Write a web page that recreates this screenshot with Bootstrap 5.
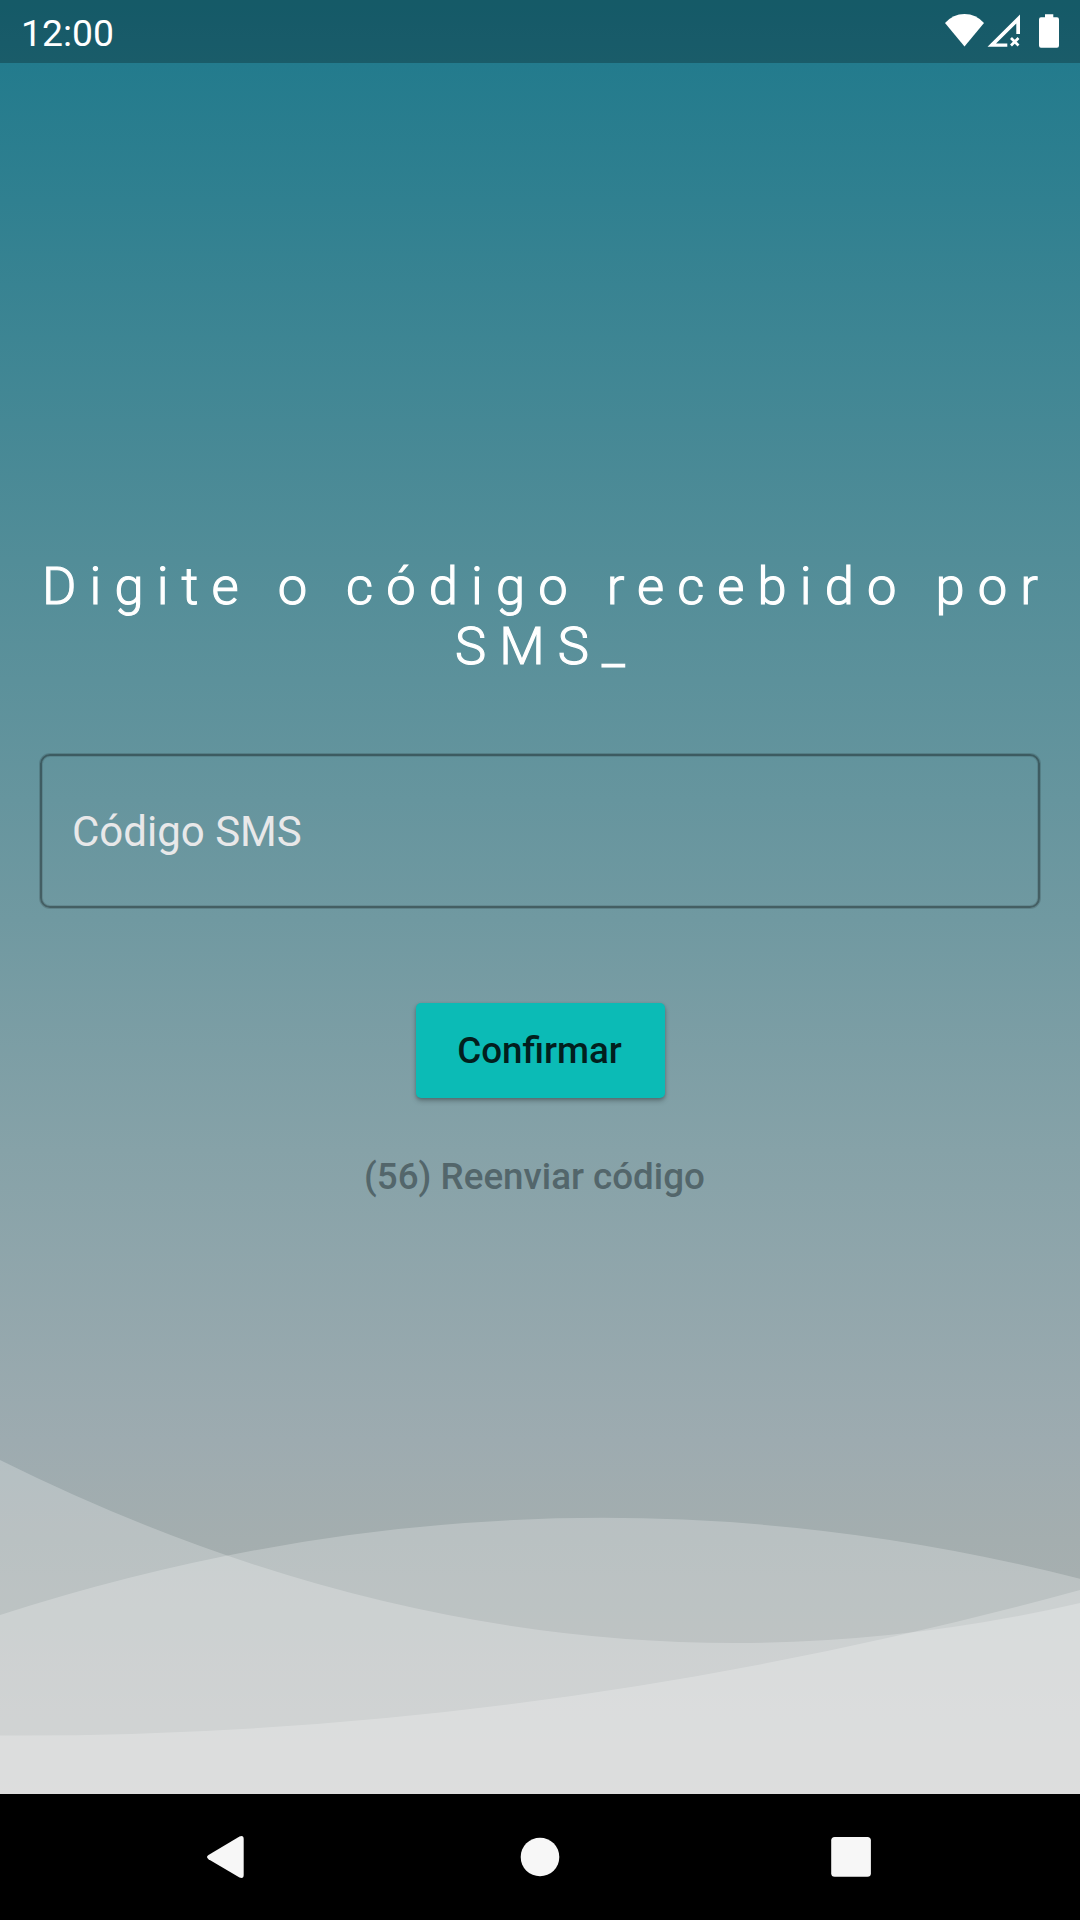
<!DOCTYPE html>
<html lang="pt-BR">
<head>
<meta charset="utf-8">
<meta name="viewport" content="width=device-width, initial-scale=1">
<title>Código SMS</title>
<link href="https://cdn.jsdelivr.net/npm/bootstrap@5.3.0/dist/css/bootstrap.min.css" rel="stylesheet">
<style>
body{font-family:Roboto,"Liberation Sans",sans-serif;background:#000;overflow:hidden}
.screen{height:1920px}
.app-body{height:1794px;background:linear-gradient(#1c788a 0,#237b8d 63px,#528d98 560px,#7099a1 920px,#86a2a8 1150px,#9dabb0 1440px,#a4aeaf 1540px,#b3b5b5 1794px)}
.status-bar{height:63px;background:rgba(0,0,0,.25);padding:0 20px 0 21px}
.clock{font-size:37.3px;line-height:63px;padding-top:2px}
.waves{z-index:0}
.form-area{z-index:1;padding:493px 40px 0}
.title-text{font-size:52.5px;font-weight:300;line-height:60px;letter-spacing:13.1px;margin:0 -20px 78px;padding-left:13px;-webkit-text-stroke:1.1px #fff}
.code-input,.code-input:focus{height:154px;border:2px solid rgba(0,0,0,.38);border-radius:10px;background:transparent;font-size:42px;padding:0 30px;box-shadow:0 0 0 1px rgba(0,0,0,.14),inset 0 0 0 1px rgba(0,0,0,.1);color:#fff}
.code-input::placeholder{color:#e8e8e9;opacity:1}
.btn-confirm,.btn-resend{font-size:36.75px;font-weight:500;line-height:44px}
.btn-confirm{--bs-btn-bg:#0bbbb6;--bs-btn-color:#021f1e;--bs-btn-border-color:#0bbbb6;width:249px;height:95px;margin-top:95px;border:0;border-radius:5px;padding:7px 12px 6px 11px;box-shadow:0 3px 5px rgba(0,0,0,.25),0 1px 3px rgba(0,0,0,.15)}
.btn-resend,.btn-resend:disabled{color:#53666b;opacity:1;border:0;padding:0;margin:57px 11px 0 0}
.nav-keys{height:126px}
</style>
<script src="https://cdn.jsdelivr.net/npm/bootstrap@5.3.0/dist/js/bootstrap.bundle.min.js"></script>
</head>
<body>
<div class="screen d-flex flex-column">
  <div class="app-body position-relative">
    <header class="status-bar d-flex justify-content-between text-white">
      <span class="clock">12:00</span>
      <svg width="120" height="63" viewBox="940 0 120 63" fill="#fff" aria-hidden="true">
        <path d="M945 23Q953 14 964.500 14T984 23L964.500 46.500Z"/>
        <path d="M987.500 46.700L1020 14.500V34H1016.300V23.500L996 43.500H1007.300V46.700Z"/>
        <path d="M1011 38L1018.500 45.500M1018.500 38L1011 45.500" stroke="#fff" stroke-width="2.700"/>
        <path d="M1045 14.200H1053.300V17.300H1057Q1059 17.300 1059 19.500V45.500Q1059 47.700 1057 47.700H1041Q1039 47.700 1039 45.500V19.500Q1039 17.300 1041 17.300H1045Z"/>
      </svg>
    </header>
    <svg class="waves position-absolute bottom-0 start-0" width="1080" height="354" viewBox="0 1440 1080 354" fill="#fff" fill-opacity=".24" aria-hidden="true">
      <path d="M0 1460Q540 1728.500 1080 1603V1794H0Z"/>
      <path d="M0 1615Q540 1441 1080 1578.700V1794H0Z"/>
      <path d="M0 1735.500Q540 1737.800 1080 1590V1794H0Z"/>
    </svg>
    <main class="form-area position-relative d-flex flex-column align-items-center">
      <h1 class="title-text text-white text-center text-nowrap">Digite o código recebido por<br>SMS_</h1>
      <input class="code-input form-control" type="text" placeholder="Código SMS" aria-label="Código SMS">
      <button class="btn btn-confirm" type="button">Confirmar</button>
      <button class="btn btn-resend" type="button" disabled>(56) Reenviar código</button>
    </main>
  </div>
  <nav class="nav-keys bg-black">
    <svg class="d-block" width="1080" height="126" viewBox="0 1794 1080 126" fill="#f7f7f7" aria-hidden="true">
      <path d="M208.500 1855Q205.500 1857 208.500 1859.200L239.500 1877.500Q243.700 1879 243.700 1875V1839Q243.700 1835 239.500 1836.500Z"/>
      <circle cx="540" cy="1857" r="19.300"/>
      <rect x="831.200" y="1837" width="39.700" height="39.700" rx="3.500"/>
    </svg>
  </nav>
</div>
</body>
</html>
